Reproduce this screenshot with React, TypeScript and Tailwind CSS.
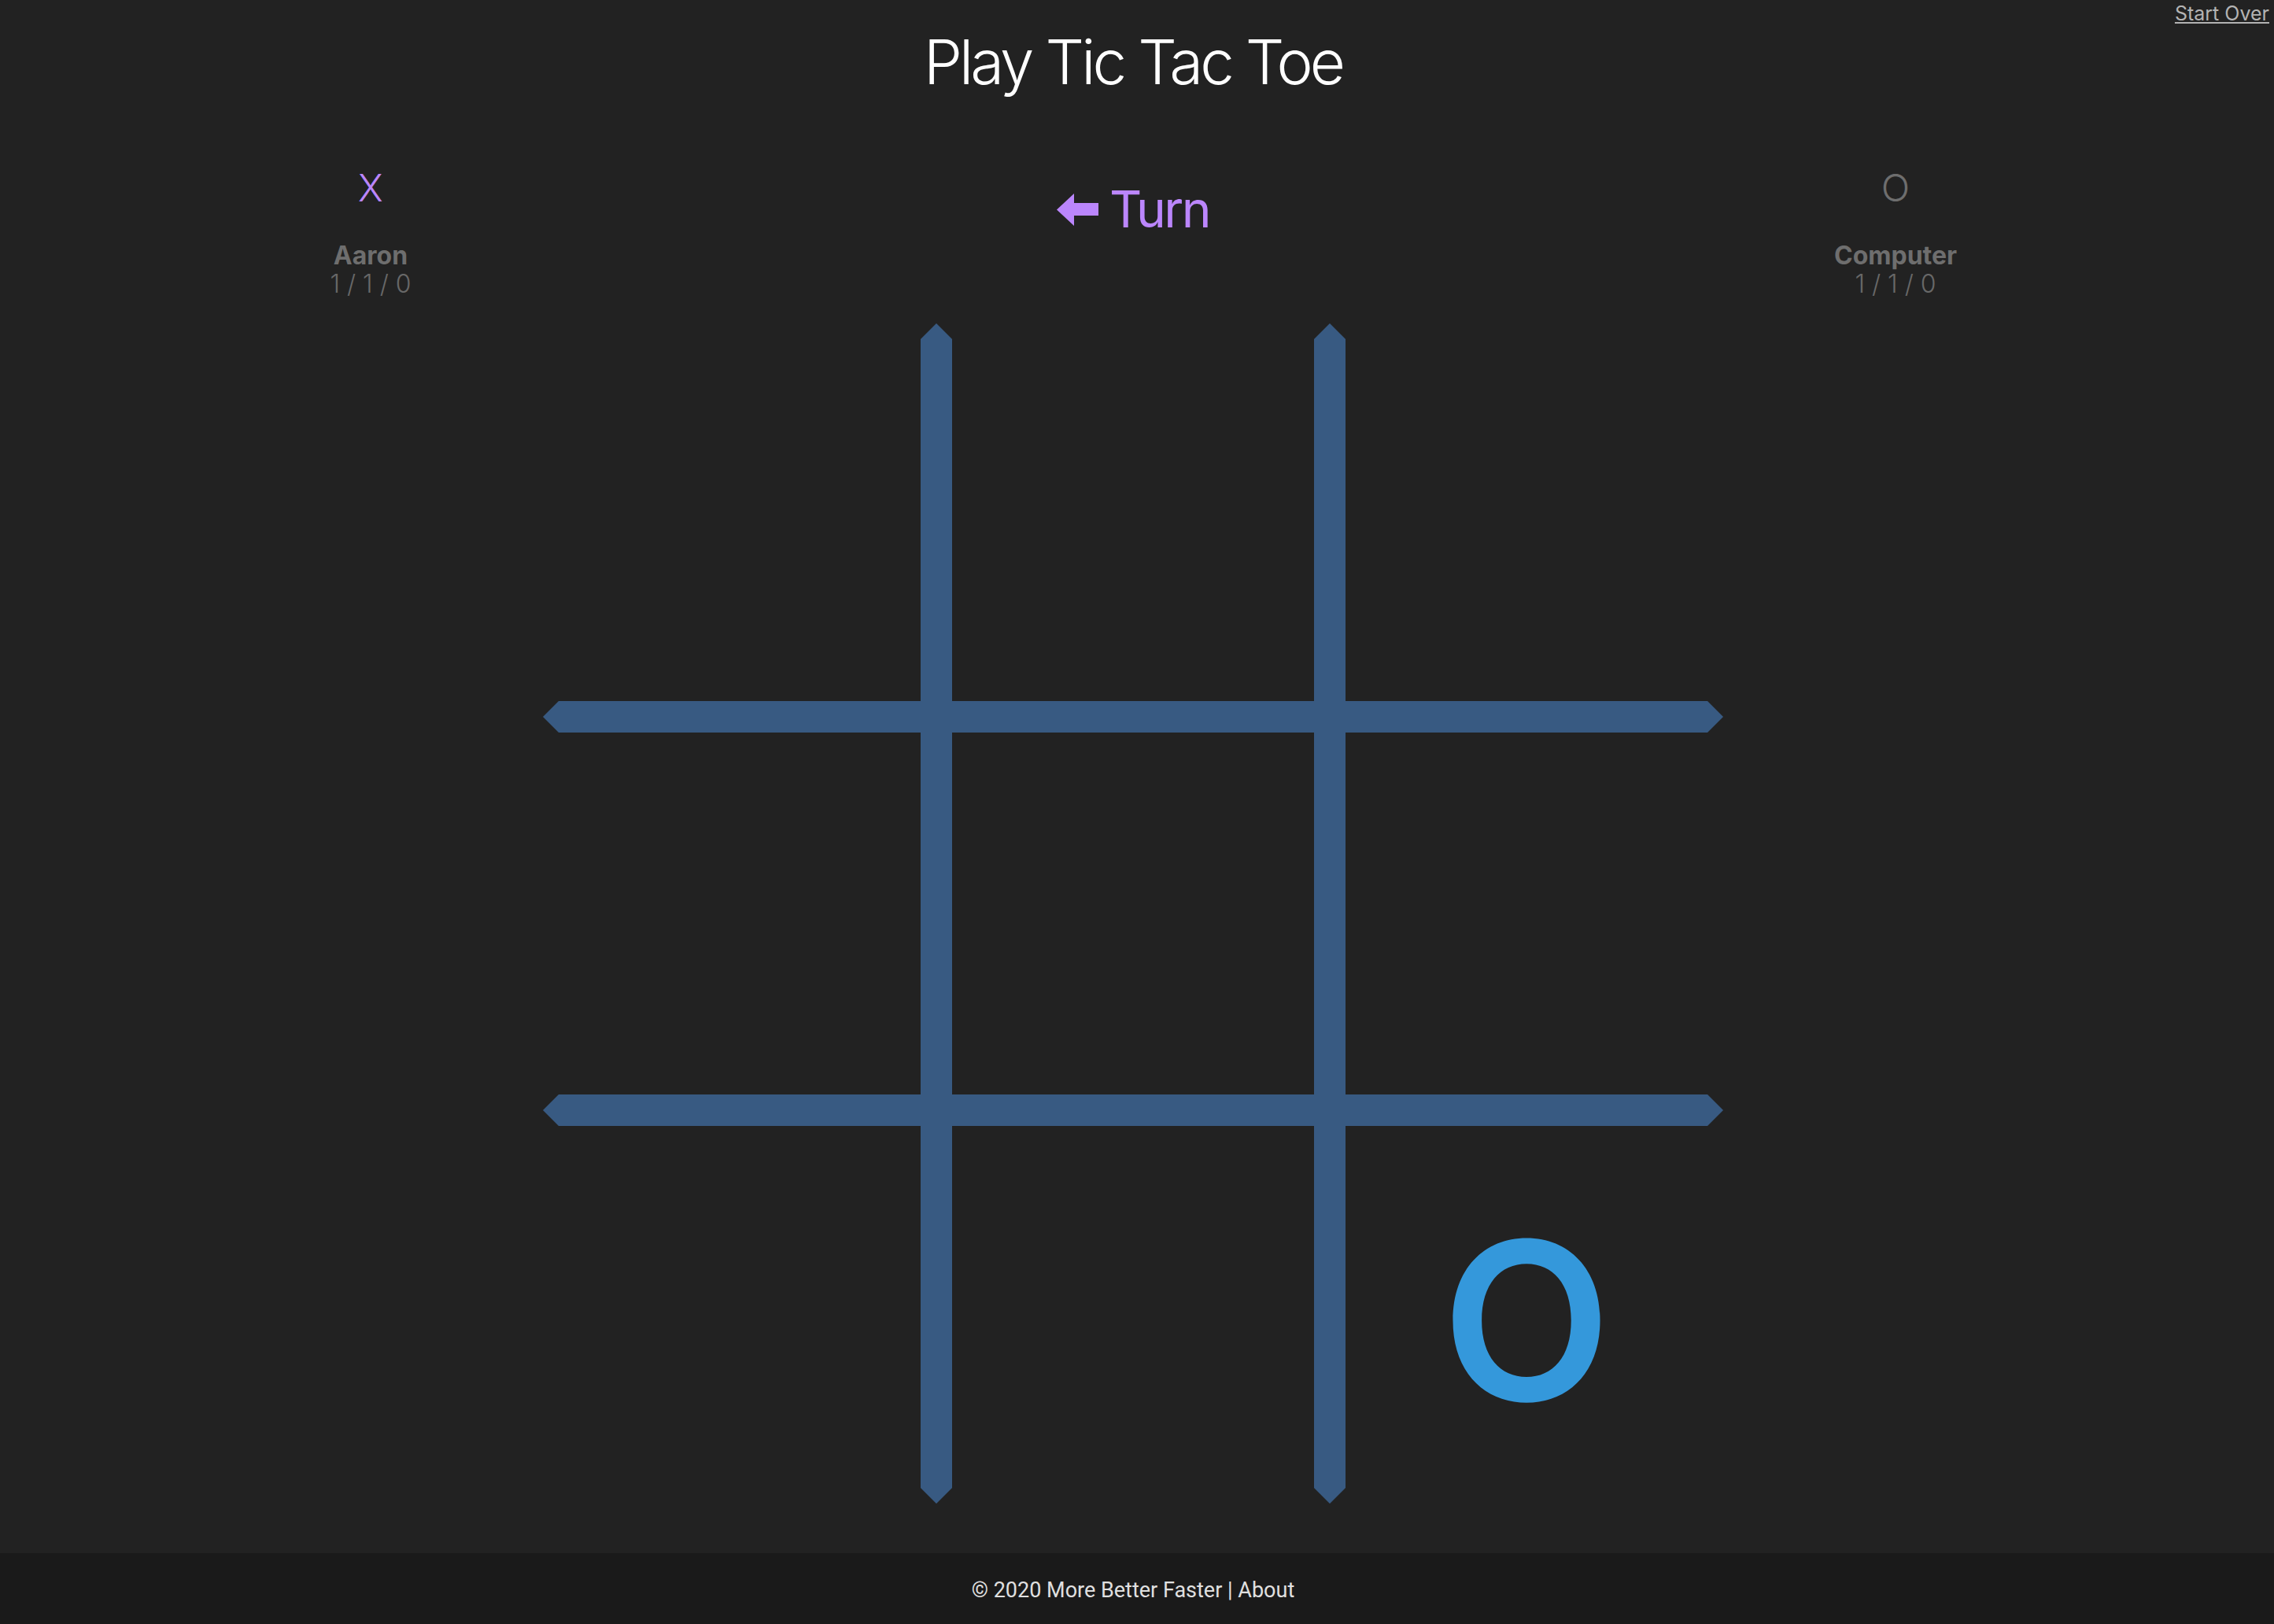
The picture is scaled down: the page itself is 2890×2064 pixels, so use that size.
import React from "react";

type Mark = "X" | "O" | null;

const board: Mark[] = [null, null, null, null, null, null, null, null, "O"];

function Player(props: { mark: string; name: string; score: string; active?: boolean }) {
  return (
    <div className="flex flex-col items-center">
      <div
        className={
          props.active
            ? "text-[48px] leading-none font-light text-[#bb86fc]"
            : "text-[48px] leading-none font-light text-[#6e6e6e]"
        }
      >
        {props.mark}
      </div>
      <div className="mt-[44px] text-[32px] leading-[36px] font-bold text-[#6e6e6e]">
        {props.name}
      </div>
      <div className="text-[32px] leading-[36px] font-light text-[#686868]">{props.score}</div>
    </div>
  );
}

function Lines() {
  // board lines with pointed ends
  return (
    <svg className="absolute inset-0" width={1500} height={1500} viewBox="0 0 1500 1500">
      <g fill="#385a82">
        <polygon points="500,0 520,20 520,1480 500,1500 480,1480 480,20" />
        <polygon points="1000,0 1020,20 1020,1480 1000,1500 980,1480 980,20" />
        <polygon points="0,500 20,480 1480,480 1500,500 1480,520 20,520" />
        <polygon points="0,1000 20,980 1480,980 1500,1000 1480,1020 20,1020" />
      </g>
    </svg>
  );
}

export default function App() {
  return (
    <div className="min-h-screen flex flex-col bg-[#222222] font-['Inter',sans-serif]">
      <main className="relative flex-1 pr-[10px]">
        <a
          href="#"
          className="absolute top-[5px] right-[6px] text-[25px] leading-none text-[#b3b3b3] underline"
        >
          Start Over
        </a>

        <h1 className="mt-[40px] text-center text-[78px] leading-none font-light tracking-[-0.05em] text-white">
          Play Tic Tac Toe
        </h1>

        <div className="mt-[97px] flex">
          <div className="w-[942px] flex justify-center">
            <Player mark="X" name="Aaron" score="1 / 1 / 0" active />
          </div>
          <div className="w-[996px] flex justify-center items-start pt-[19px]">
            <div className="flex items-center gap-[14px] text-[#bb86fc]">
              <svg width={53} height={41} viewBox="0 0 53 41">
                <polygon points="0,20.5 22,0 22,12 53,12 53,28 22,28 22,41" fill="#bb86fc" />
              </svg>
              <span className="text-[64px] leading-none tracking-[-0.04em]">Turn</span>
            </div>
          </div>
          <div className="w-[942px] flex justify-center">
            <Player mark="O" name="Computer" score="1 / 1 / 0" />
          </div>
        </div>

        <div className="mx-auto mt-[32px] mb-[62px] relative w-[1500px] h-[1500px]">
          <Lines />
          <div className="relative grid grid-cols-3 grid-rows-3 w-full h-full">
            {board.map((m, i) => (
              <div key={i} className="flex items-center justify-center pt-[36px]">
                {m ? (
                  <span className="text-[280px] leading-none font-semibold text-[#3498db]">{m}</span>
                ) : null}
              </div>
            ))}
          </div>
        </div>
      </main>

      <footer className="h-[90px] pr-[10px] flex items-center justify-center bg-[#1a1a1a] font-['Roboto',sans-serif] text-[27px] text-[#e0e0e0]">
        <span className="mt-[4px]">© 2020 More Better Faster | About</span>
      </footer>
    </div>
  );
}
